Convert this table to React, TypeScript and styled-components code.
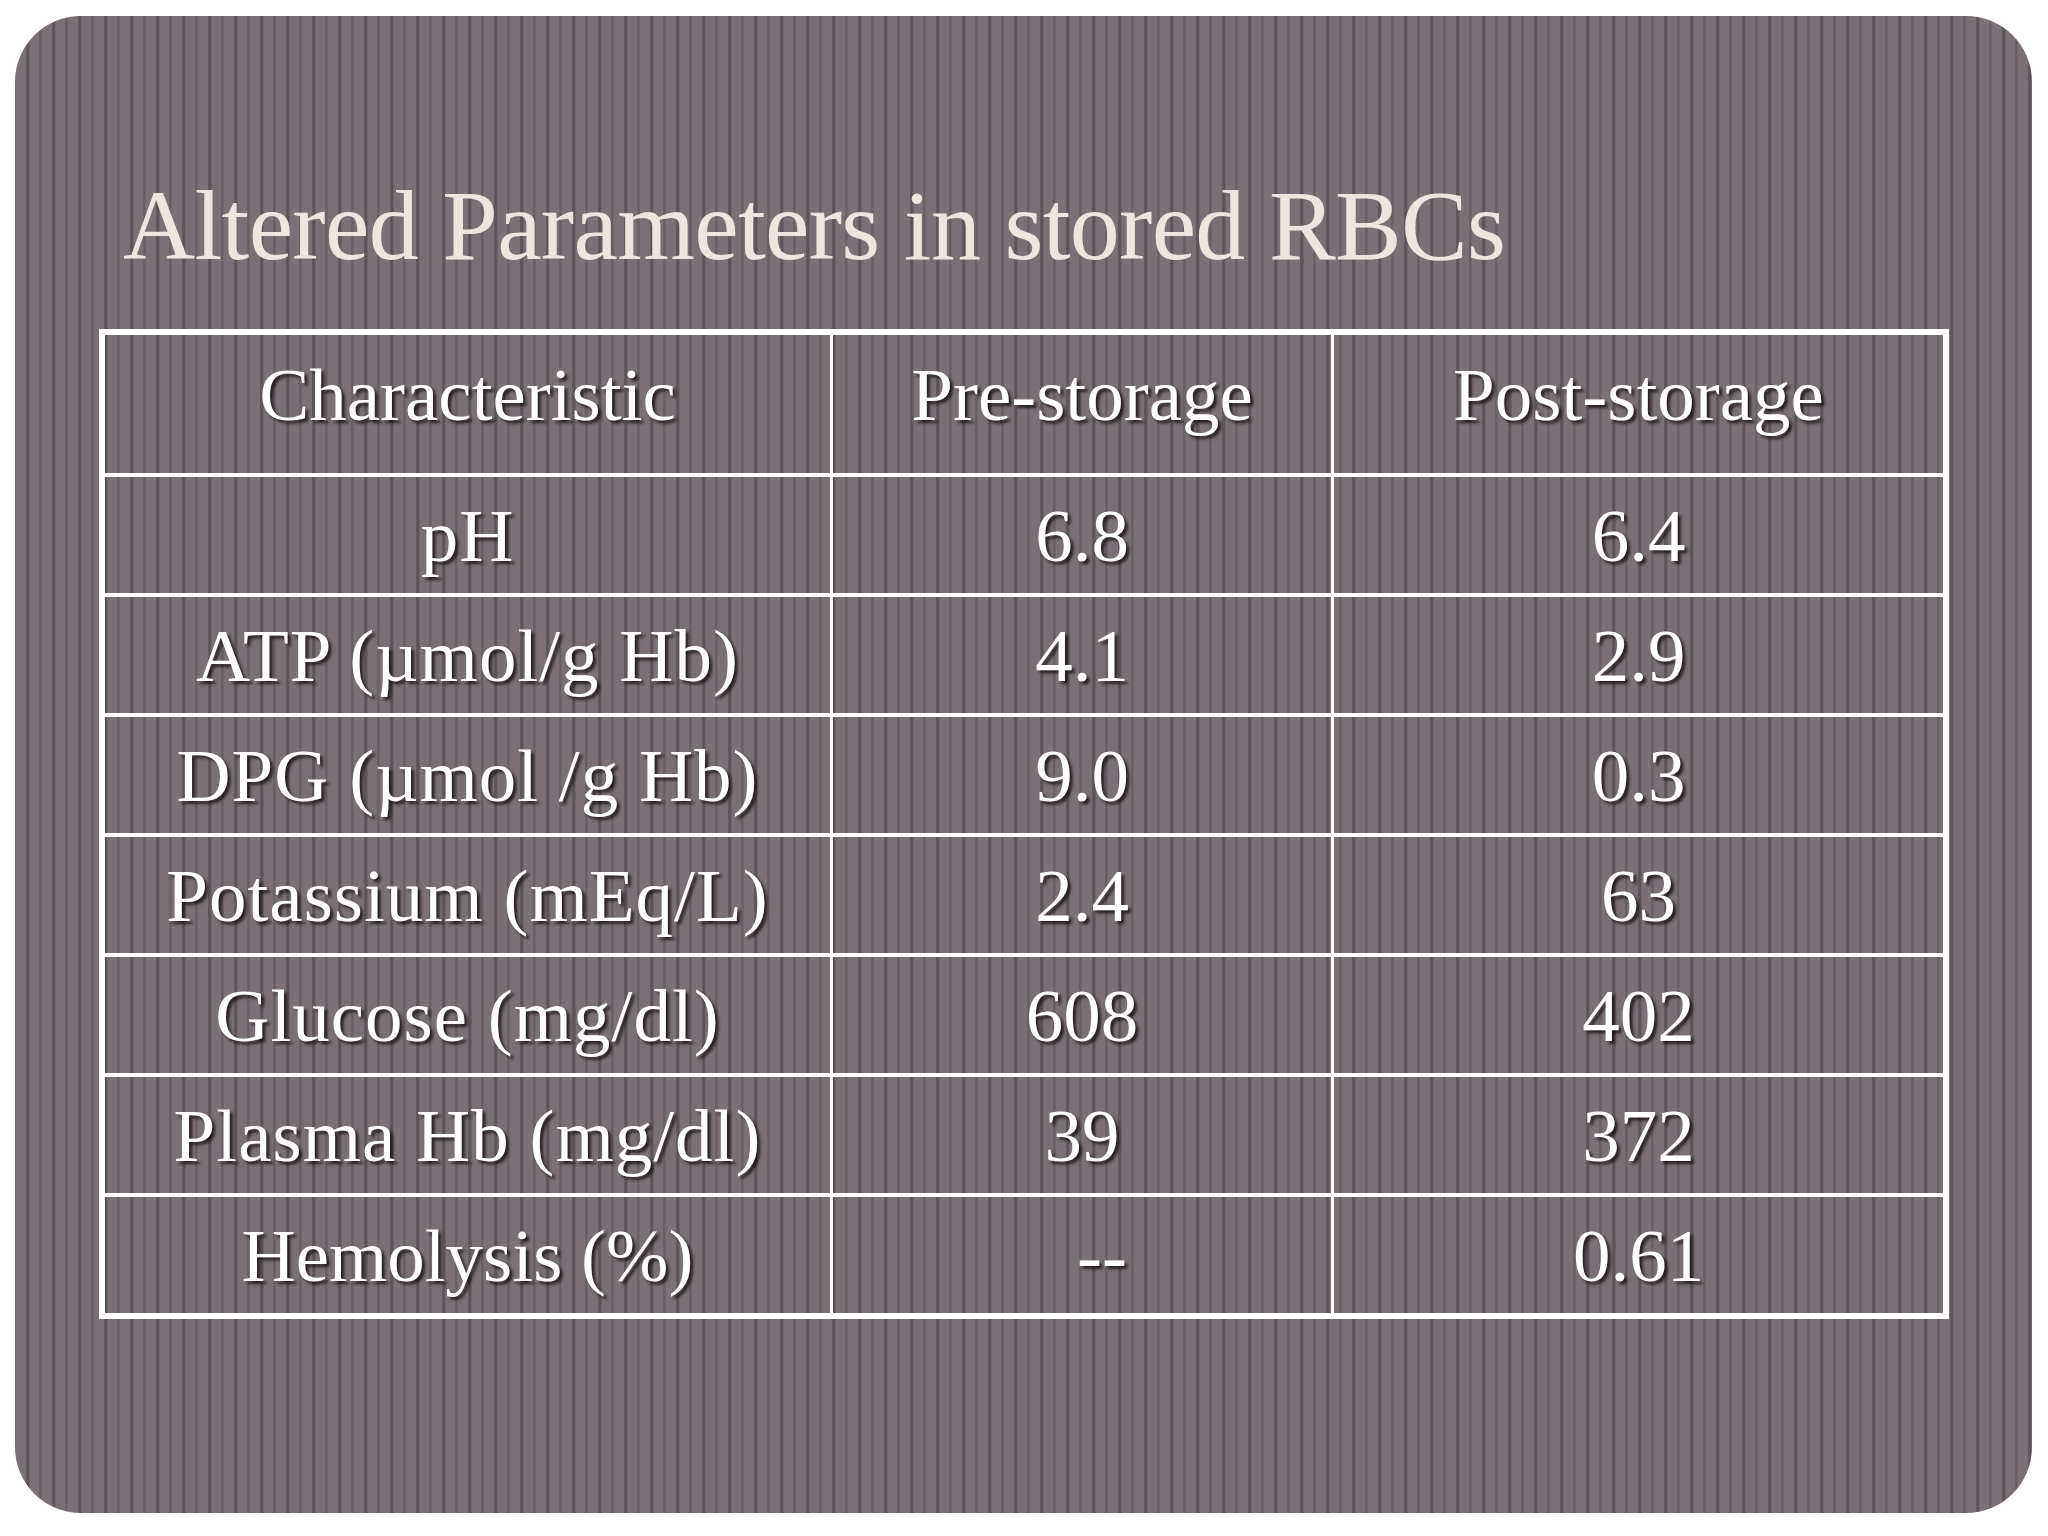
import styled, { createGlobalStyle, css } from 'styled-components';

const GlobalStyle = createGlobalStyle`
  html, body {
    margin: 0;
    padding: 0;
    background: #ffffff;
  }
  body {
    font-family: "Liberation Serif", "Times New Roman", serif;
  }
`;

// vertical pinstripe fill used by the slide and each table cell
const stripes = css`
  background-color: #797175;
  background-image: linear-gradient(
    90deg,
    #655e62 0px,
    #5b5458 1px,
    #5d565a 3px,
    #797175 4px,
    #797175 13px,
    #6a6367 13px,
    #655e62 15px,
    #797175 16px,
    #797175 26px
  );
  background-size: 26px 100%;
  background-repeat: repeat-x;
  background-attachment: fixed;
`;

const Slide = styled.div`
  ${stripes};
  box-sizing: border-box;
  width: 2017px;
  height: 1497px;
  margin: 16px 0 0 15px;
  padding: 160px 0 0 84px;
  border-radius: 66px;
  overflow: hidden;
  display: flex;
  flex-direction: column;
`;

const Title = styled.h1`
  margin: 0 0 53px 24px;
  font-family: "Liberation Serif", "Times New Roman", serif;
  font-weight: normal;
  font-size: 100px;
  line-height: 100px;
  color: #ece5e0;
  letter-spacing: -0.7px;
`;

const Table = styled.div`
  width: 1850px;
  box-sizing: border-box;
  border: 6px solid #ffffff;
  background: #ffffff;
  display: grid;
  grid-template-columns: 725px 498px 609px;
  grid-template-rows: 138px repeat(7, 116px);
  column-gap: 3px;
  row-gap: 4px;
`;

const Cell = styled.div<{ $shift?: number; $label?: boolean }>`
  ${stripes};
  display: flex;
  align-items: center;
  justify-content: center;
  color: #ffffff;
  font-size: 75px;
  line-height: 1;
  letter-spacing: ${(p) => (p.$label ? '1px' : '0')};
  padding-left: ${(p) => p.$shift ?? 0}px;
  text-shadow: 3px 3px 3px rgba(20, 12, 16, 0.8);
  white-space: nowrap;
`;

const HeaderCell = styled(Cell)`
  padding-bottom: 20px;
`;

const headers = ['Characteristic', 'Pre-storage', 'Post-storage'];

const rows: [string, string, string][] = [
  ['pH', '6.8', '6.4'],
  ['ATP (µmol/g Hb)', '4.1', '2.9'],
  ['DPG (µmol /g Hb)', '9.0', '0.3'],
  ['Potassium (mEq/L)', '2.4', '63'],
  ['Glucose (mg/dl)', '608', '402'],
  ['Plasma Hb (mg/dl)', '39', '372'],
  ['Hemolysis (%)', '--', '0.61'],
];

const App = () => {
  return (
    <>
      <GlobalStyle />
      <Slide>
        <Title>Altered Parameters in stored RBCs</Title>
        <Table>
          {headers.map((h) => (
            <HeaderCell key={h}>{h}</HeaderCell>
          ))}
          {rows.map((r) =>
            r.map((v, i) => (
              <Cell
                key={r[0] + i}
                $label={i === 0 && v !== 'Hemolysis (%)'}
                $shift={v === '--' ? 40 : 0}
              >
                {v}
              </Cell>
            ))
          )}
        </Table>
      </Slide>
    </>
  );
};

export default App;
